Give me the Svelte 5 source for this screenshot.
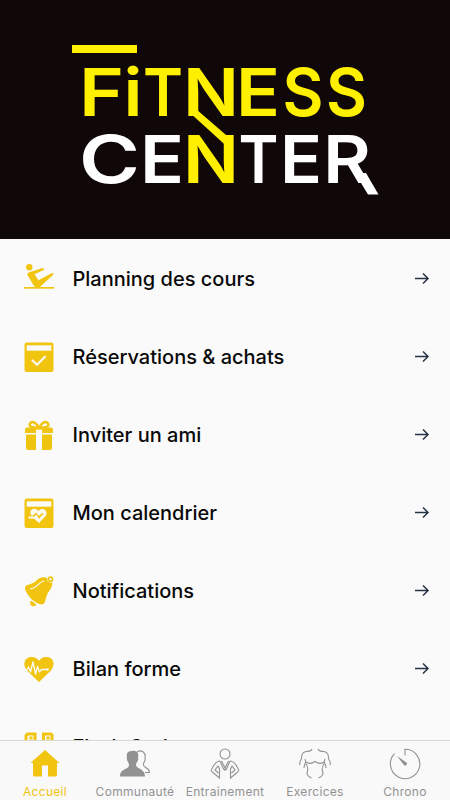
<script lang="ts">
  type Letter = { char: string; x: number; width: number }

  const topLine: Letter[] = [
    { char: 'F', x: 79, width: 45 },
    { char: 'i', x: 123.5, width: 19 },
    { char: 'T', x: 143, width: 40 },
    { char: 'N', x: 183, width: 56 },
    { char: 'E', x: 236, width: 44 },
    { char: 'S', x: 282.5, width: 41 },
    { char: 'S', x: 326, width: 41 },
  ]

  const bottomLine: Letter[] = [
    { char: 'C', x: 79, width: 61 },
    { char: 'E', x: 140, width: 44 },
    { char: 'N', x: 183, width: 56 },
    { char: 'T', x: 238.5, width: 40 },
    { char: 'E', x: 280, width: 42 },
    { char: 'R', x: 323, width: 48 },
  ]

  const items = [
    { icon: 'pilates', label: 'Planning des cours' },
    { icon: 'booking', label: 'Réservations & achats' },
    { icon: 'gift', label: 'Inviter un ami' },
    { icon: 'calendar', label: 'Mon calendrier' },
    { icon: 'bell', label: 'Notifications' },
    { icon: 'heart', label: 'Bilan forme' },
    { icon: 'qr', label: 'Flash Code' },
  ]

  const tabs = [
    { icon: 'home', label: 'Accueil' },
    { icon: 'people', label: 'Communauté' },
    { icon: 'coach', label: 'Entrainement' },
    { icon: 'torso', label: 'Exercices' },
    { icon: 'timer', label: 'Chrono' },
  ]

  let active = $state('home')
</script>

<div class="screen">
  <header class="banner">
    <svg class="logo" viewBox="0 0 450 239">
      <rect x="72" y="45" width="65" height="8" fill="#fff000" />
      {#each topLine as l}
        <text class="yellow" x={l.x} y="116" textLength={l.width} lengthAdjust="spacingAndGlyphs">{l.char}</text>
      {/each}
      {#each bottomLine as l}
        <text class:yellow={l.char === 'N'} x={l.x} y="182.5" textLength={l.width} lengthAdjust="spacingAndGlyphs">{l.char}</text>
      {/each}
      <path class="ribbon" d="M189 103L233 141V152L189 112Z" />
      <path class="swash" d="M355 173H366L378.500 194.500H368Z" />
    </svg>
  </header>

  <nav class="menu">
    {#each items as item}
      <button class="row">
        <svg class="row-icon" viewBox="0 0 30 30">
          {#if item.icon === 'pilates'}
            <circle cx="5.300" cy="3.300" r="3.200" />
            <path d="M3.200 10.500Q3.500 8.300 6 8L18.500 3.900Q20.500 4 19.500 6L10.500 10.200L14.500 16.200L28 9Q30.300 9 29 11L17 22Q13.500 25 10 22Z" />
            <rect y="23" width="30" height="1.700" />
          {:else if item.icon === 'booking' || item.icon === 'calendar'}
            <rect x=".5" y=".5" width="29" height="29.500" rx="2.200" />
            <rect class="cut" x="2.700" y="3.300" width="24.600" height="5.400" />
            {#if item.icon === 'booking'}
              <path class="cut-line" stroke-width="2.200" d="M8.500 18.500L13 22.700L21 14.800" />
            {:else}
              <path class="cut" d="M6.500 15C5.500 11 11 8.600 14.500 13C18 8.600 24.500 12 22 17.500L15 25L10 20.500H4.500V18.500H10.500L12.500 16.500L15 21L18.500 16.500H21L18 15L15 18L12 14.500L9 17.500H7Z" />
            {/if}
          {:else if item.icon === 'gift'}
            <path class="line" stroke-width="2.500" d="M15 8C7 8 4.500 6 6 3.500C8.500 0 12.500 3 15 8ZM15 8C23 8 25.500 6 24 3.500C21.500 0 17.500 3 15 8Z" />
            <path d="M3 7.500H27Q29 7.500 29 9.500V13H18V9.500H12V13H1V9.500Q1 7.500 3 7.500ZM2 14.500H12V30H4Q2 30 2 28ZM18 14.500H28V28Q28 30 26 30H18Z" />
          {:else if item.icon === 'bell'}
            <path d="M1.200 11C2 8 9 9 13 4C16 1 20 .5 24 2.500L28 6C29 12 25 14 23 19C21 24 21.500 28 18 28.500C11 28 3 20 1 13ZM6 25Q8.500 24.500 12.500 29Q9 31.500 6.500 29Z" />
            <circle class="cut" cx="26.500" cy="3.200" r="3.200" />
            <circle class="line" cx="26.500" cy="3.200" r="2.100" stroke-width="1.600" />
            <path class="cut-line" stroke-width="1.100" d="M6.500 13C14 12 14 6 20 5" />
          {:else if item.icon === 'heart'}
            <path d="M15 28L3.500 17C-2.500 10 1 3 7.500 3C11.500 3 14 5 15 7C16 5 18.500 3 22.500 3C29 3 32.500 10 26.500 17Z" />
            <path class="cut-line" stroke-width="1.300" d="M0 16H3L4.500 13L6.500 18L9 8L11.500 20L13.500 12.500L15.500 18L17.500 15.500H23" />
            <circle class="cut" cx="23.500" cy="15.500" r="1.200" />
          {:else}
            <path class="line" stroke-width="3" d="M3.500 2H11V10H2V3.500ZM19.500 2H27L28 3V10H19.500Z" />
            <rect x="5.500" y="4.500" width="3" height="3" />
            <rect x="22.500" y="4.500" width="3" height="3" />
          {/if}
        </svg>
        <span class="label">{item.label}</span>
        <svg class="arrow" viewBox="0 0 16 14">
          <path d="M1 6.500H14M9 1.500L14 6.500L9 11.500" />
        </svg>
      </button>
    {/each}
  </nav>

  <nav class="tabs">
    {#each tabs as tab}
      <button class="tab" class:active={active === tab.icon} onclick={() => (active = tab.icon)}>
        <svg viewBox="0 0 32 32">
          {#if tab.icon === 'home'}
            <path class="solid" d="M16 2L30.500 15H28V27Q28 28.500 26.500 28.500H19V17.500H13V28.500H5.500Q4 28.500 4 27V15H1.500Z" />
          {:else if tab.icon === 'people'}
            <path d="M18 4C23 1 27 5 26 10C27 13 24 14 24.500 17C24.500 20 30 19 30.500 24.500H26" />
            <path class="solid" d="M13 3C19 2 20 7 19 10C20 13 17 14 17 17C17 21 26 20 26 28.500H1C1 20 10 22 10 17C10 14 7 13 8 9C7 5 9 3 13 3Z" />
          {:else if tab.icon === 'coach'}
            <circle cx="16" cy="6" r="5" />
            <path d="M11 13C7 13 5 16 2.500 21.500C1.500 23 3 24 4.500 25L10.500 30V21L9 18L6 22L9.500 25M21 13C25 13 27 16 29.500 21.500C30.500 23 29 24 27.500 25L21.500 30V21L23 18L26 22L22.500 25M11 13L15 22M21 13L17 22M12.500 13L16 20L19.500 13M16 20V23" />
          {:else if tab.icon === 'torso'}
            <path d="M13 1Q12 3.500 7 3.500Q2 4.500 2.500 11Q0 14 1 17M19 1Q20 3.500 25 3.500Q30 4.500 29.500 11Q32 14 31 17M6 11Q7.500 14 5.500 17L5 20M26 11Q24.500 14 26.500 17L27 20M7 14Q11 17 16 13.500Q21 17 25 14M7 16Q10 20 8 25Q8 28 12.500 30M25 16Q22 20 24 25Q24 28 19.500 30" />
          {:else}
            <path d="M16 7.500V1.200A14.700 14.700 0 1 1 5.600 5.600" />
            <path class="solid" d="M8 8L17.400 14.600A1.500 1.500 0 0 1 14.900 17Z" />
          {/if}
        </svg>
        <span>{tab.label}</span>
      </button>
    {/each}
  </nav>
</div>

<style>
  :global(body) {
    margin: 0;
    background: #fafafa;
  }

  .screen {
    display: flex;
    flex-direction: column;
    height: 800px;
    overflow: hidden;
    background: #fafafa;
    font-family: Inter, "Liberation Sans", sans-serif;
  }

  button {
    padding: 0;
    border: 0;
    background: none;
    font-family: inherit;
    cursor: pointer;
  }

  .banner {
    height: 239px;
    flex-shrink: 0;
    background: #100708;
  }

  .logo {
    display: block;
    width: 100%;
    height: 100%;
  }

  .logo text {
    font-size: 66.4px;
    font-weight: 600;
    fill: #fff;
  }

  .logo .yellow,
  .ribbon {
    fill: #fff000;
  }

  .swash {
    fill: #fff;
  }

  .menu {
    flex: 1;
    min-height: 0;
    padding-top: 1px;
    overflow: hidden;
  }

  .row {
    display: flex;
    align-items: center;
    width: 100%;
    height: 78px;
    padding: 0 20px 0 24px;
    text-align: left;
  }

  .row-icon {
    width: 30px;
    height: 30px;
    fill: #f1c40f;
    overflow: visible;
  }

  .line {
    fill: none;
    stroke: #f1c40f;
  }

  .cut {
    fill: #fafafa;
  }

  .cut-line {
    fill: none;
    stroke: #fafafa;
    stroke-linecap: round;
    stroke-linejoin: round;
  }

  .label {
    flex: 1;
    margin-left: 18.5px;
    font-size: 20px;
    font-weight: 500;
    color: #090909;
  }

  .arrow {
    width: 16px;
    height: 14px;
    fill: none;
    stroke: #263245;
    stroke-width: 1.5;
  }

  .tabs {
    display: grid;
    grid-template-columns: repeat(5, 1fr);
    height: 59px;
    flex-shrink: 0;
    border-top: 1px solid #d8d8d8;
    background: #f9f9f9;
  }

  .tab {
    display: flex;
    flex-direction: column;
    align-items: center;
    padding-top: 7px;
    color: #929292;
  }

  .tab.active {
    color: #f1c40f;
  }

  .tab svg {
    width: 32px;
    height: 32px;
    fill: none;
    stroke: currentColor;
    stroke-width: 1.1;
  }

  .tab .solid {
    fill: currentColor;
    stroke: none;
  }

  .tab span {
    margin-top: 4px;
    font-size: 12px;
    line-height: 16px;
    letter-spacing: 0.3px;
    white-space: nowrap;
  }
</style>
